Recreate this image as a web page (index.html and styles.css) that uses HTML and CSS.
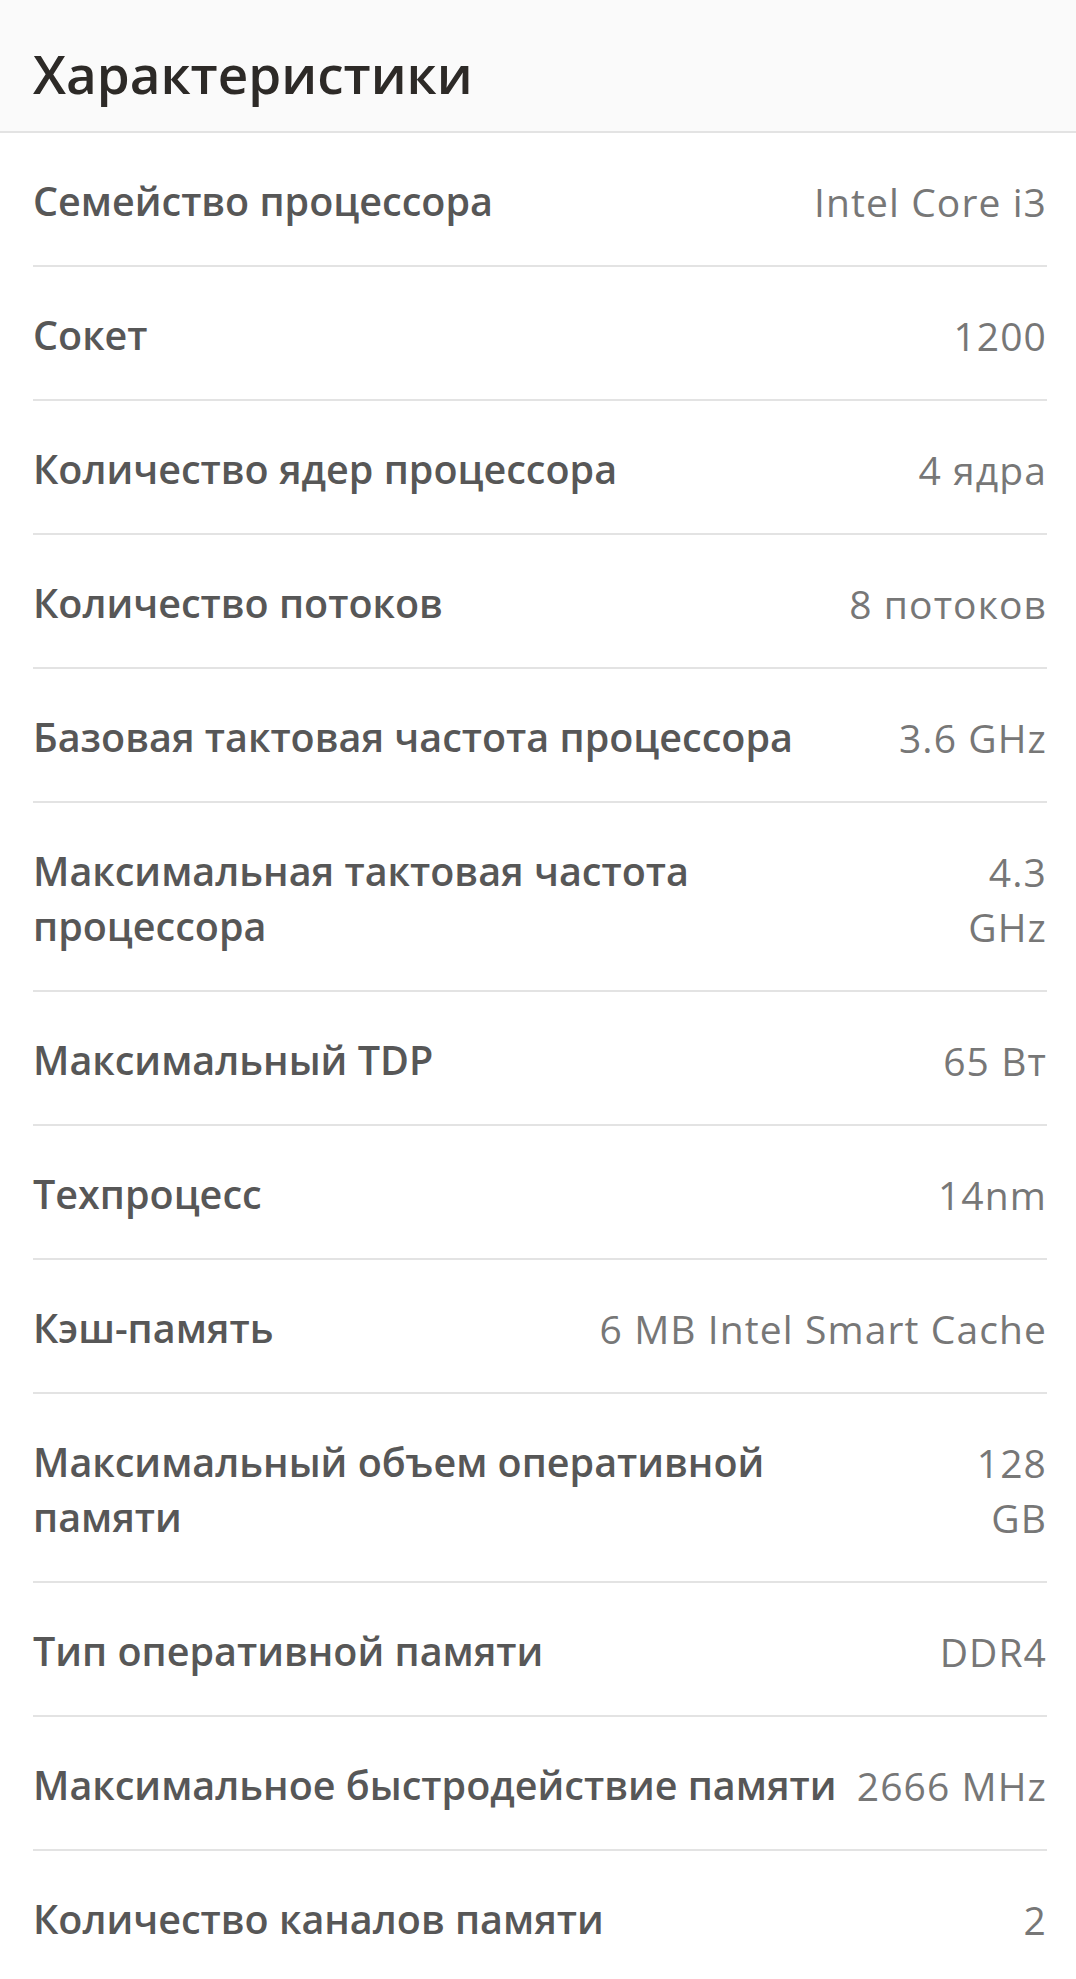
FILE: index.html
```html
<!DOCTYPE html>
<html lang="ru">
<head>
    <meta charset="UTF-8">
    <meta name="viewport" content="width=device-width, initial-scale=1.0">
    <title>Характеристики</title>
    <link rel="stylesheet" href="styles.css">
</head>
<body>

<div class="specs">
    <div class="specs-header">
        <h2 class="specs-title">Характеристики</h2>
    </div>

    <div class="specs-list">
        <div class="spec-row">
            <div class="spec-name">Семейство процессора</div>
            <div class="spec-value">Intel Core i3</div>
        </div>
        <div class="spec-row">
            <div class="spec-name">Сокет</div>
            <div class="spec-value">1200</div>
        </div>
        <div class="spec-row">
            <div class="spec-name">Количество ядер процессора</div>
            <div class="spec-value">4 ядра</div>
        </div>
        <div class="spec-row">
            <div class="spec-name">Количество потоков</div>
            <div class="spec-value">8 потоков</div>
        </div>
        <div class="spec-row">
            <div class="spec-name">Базовая тактовая частота процессора</div>
            <div class="spec-value">3.6 GHz</div>
        </div>
        <div class="spec-row">
            <div class="spec-name">Максимальная тактовая частота процессора</div>
            <div class="spec-value">4.3 GHz</div>
        </div>
        <div class="spec-row">
            <div class="spec-name">Максимальный TDP</div>
            <div class="spec-value">65 Вт</div>
        </div>
        <div class="spec-row">
            <div class="spec-name">Техпроцесс</div>
            <div class="spec-value">14nm</div>
        </div>
        <div class="spec-row">
            <div class="spec-name">Кэш-память</div>
            <div class="spec-value">6 MB Intel Smart Cache</div>
        </div>
        <div class="spec-row">
            <div class="spec-name">Максимальный объем оперативной памяти</div>
            <div class="spec-value">128 GB</div>
        </div>
        <div class="spec-row">
            <div class="spec-name">Тип оперативной памяти</div>
            <div class="spec-value">DDR4</div>
        </div>
        <div class="spec-row">
            <div class="spec-name">Максимальное быстродействие памяти</div>
            <div class="spec-value">2666 MHz</div>
        </div>
        <div class="spec-row">
            <div class="spec-name">Количество каналов памяти</div>
            <div class="spec-value">2</div>
        </div>
    </div>
</div>

</body>
</html>
```

FILE: styles.css
```css
body {
    margin: 0;
    font-family: "Open Sans", "Noto Sans", sans-serif;
    background-color: #fff;
}
.specs-header {
    background-color: #fafafa;
    border-bottom: 2px solid #e3e3e3;
    padding: 43px 33px 26px;
}
.specs-title {
    margin: 0;
    font-size: 53px;
    line-height: 62px;
    font-weight: 600;
    color: #2d2a27;
}
.specs-list {
    padding: 0 29px 0 33px;
}
.spec-row {
    display: flex;
    justify-content: space-between;
    padding: 41px 0 36px;
    border-bottom: 2px solid #e3e3e3;
    font-size: 39.5px;
    line-height: 55px;
}
.spec-name {
    font-weight: 600;
    color: #575757;
}
.spec-value {
    margin-left: 6px;
    text-align: right;
    font-size: 39px;
    letter-spacing: 1.1px;
    color: #777;
}
```
